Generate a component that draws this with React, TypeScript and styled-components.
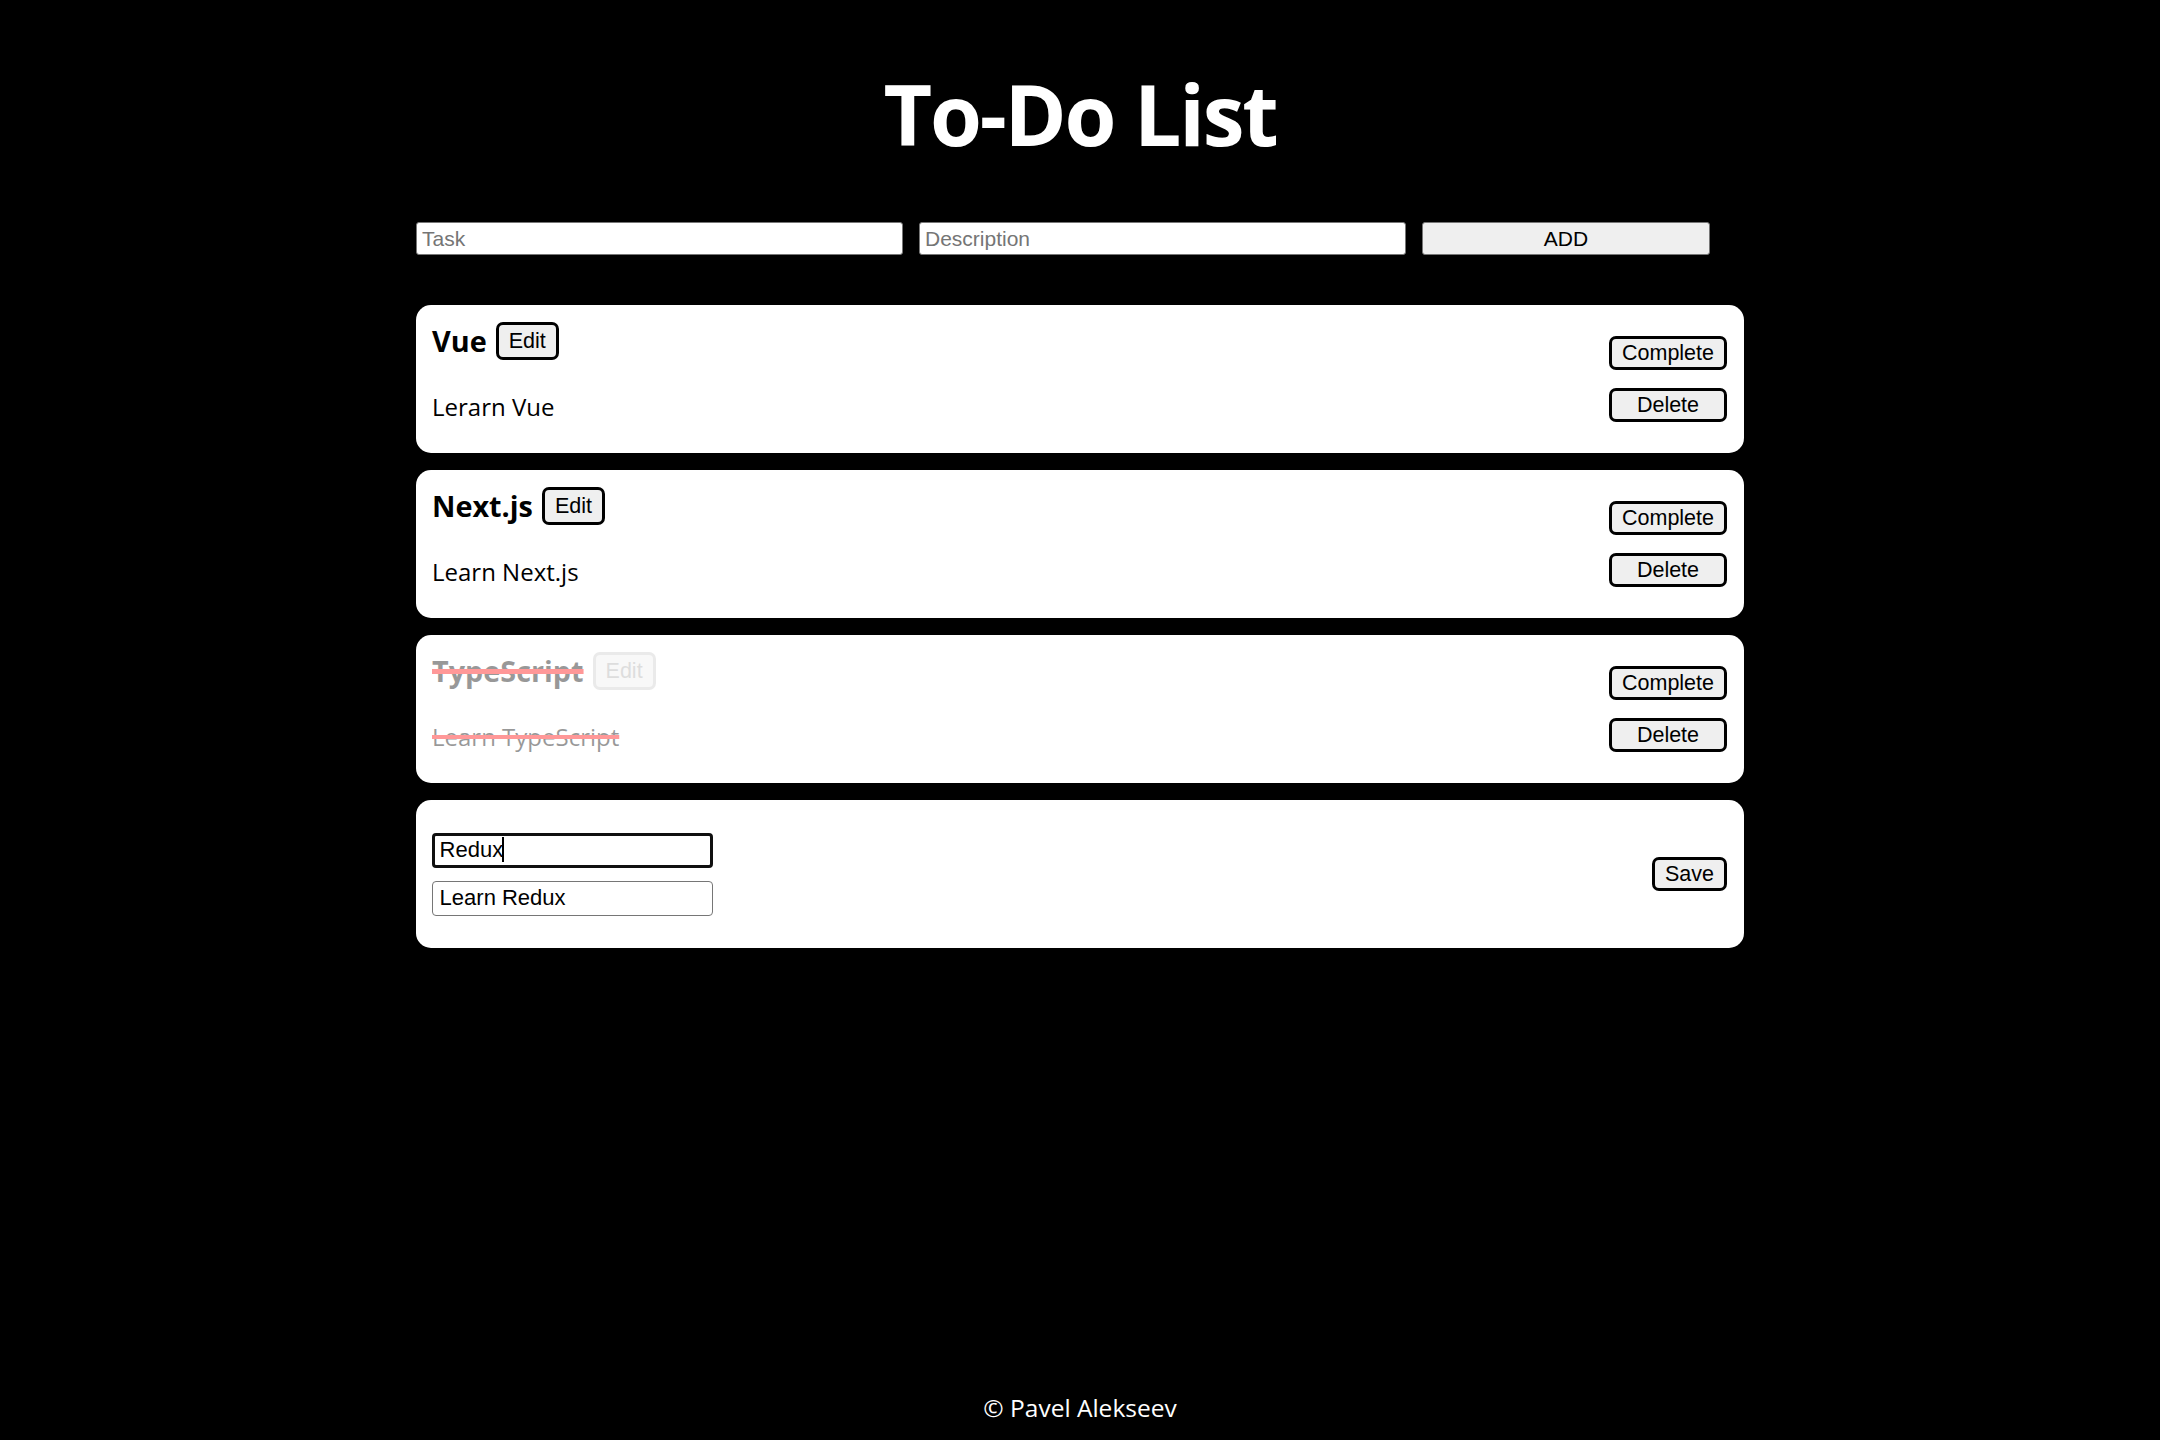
import React, { useEffect, useRef } from 'react';
import styled, { createGlobalStyle } from 'styled-components';

const GlobalStyle = createGlobalStyle`
  html, body {
    margin: 0;
    padding: 0;
    background: #000;
  }
  body {
    font-family: "Open Sans", "Noto Sans", sans-serif;
  }
  * {
    box-sizing: border-box;
  }
`;

const Page = styled.div`
  min-height: 100vh;
  display: flex;
  flex-direction: column;
  align-items: center;
  padding-top: 64px;
`;

const Title = styled.h1`
  margin: 0;
  font-size: 84px;
  font-weight: 700;
  line-height: 100px;
  letter-spacing: -2.2px;
  color: #fff;
  text-align: center;
`;

const Main = styled.main`
  width: 1328px;
  margin-top: 58px;
`;

const AddForm = styled.form`
  display: flex;
  gap: 16px;
  height: 33px;
`;

const FormInput = styled.input`
  width: 487px;
  height: 33px;
  padding: 0 5px;
  border: 1px solid #767676;
  border-radius: 3px;
  background: #fff;
  font-family: "Liberation Sans", Arial, sans-serif;
  font-size: 21px;
  color: #000;
  outline: none;

  &::placeholder {
    color: #757575;
  }
`;

const AddButton = styled.button`
  width: 288px;
  height: 33px;
  border: 1px solid #767676;
  border-radius: 3px;
  background: #efefef;
  font-family: "Liberation Sans", Arial, sans-serif;
  font-size: 21px;
  color: #000;
`;

const TodoList = styled.ul`
  list-style: none;
  margin: 50px 0 0;
  padding: 0;
  display: flex;
  flex-direction: column;
  gap: 17px;
`;

const Card = styled.li`
  height: 148px;
  background: #fff;
  border-radius: 15px;
  display: flex;
  align-items: center;
  justify-content: space-between;
  padding: 0 17px 0 16px;
`;

const Info = styled.div<{ $done: boolean }>`
  align-self: flex-start;
  padding-top: 17px;
  display: flex;
  flex-direction: column;
  opacity: ${({ $done }) => ($done ? 0.4 : 1)};
`;

const HeadRow = styled.div`
  display: flex;
  align-items: stretch;
  gap: 9px;
`;

const TaskTitle = styled.h3<{ $done: boolean }>`
  margin: 0;
  font-size: 28.8px;
  font-weight: 700;
  line-height: 38.4px;
  color: #000;
  text-decoration: ${({ $done }) => ($done ? 'line-through' : 'none')};
  text-decoration-color: #ff0000;
  text-decoration-thickness: 5px;
`;

const TaskDesc = styled.p<{ $done: boolean }>`
  margin: 31px 0 0;
  font-size: 24px;
  line-height: 32px;
  color: #000;
  text-decoration: ${({ $done }) => ($done ? 'line-through' : 'none')};
  text-decoration-color: #ff0000;
  text-decoration-thickness: 4px;
`;

const Actions = styled.div`
  display: flex;
  flex-direction: column;
  gap: 18px;
`;

const ActionButton = styled.button`
  padding: 1.5px 10px;
  border: 3px solid #000;
  border-radius: 7px;
  background: #efefef;
  font-family: "Liberation Sans", Arial, sans-serif;
  font-size: 21.5px;
  color: #000;
  cursor: pointer;

  &:disabled {
    color: #acacac;
    border-color: #cbcbcb;
    cursor: default;
  }
`;

const EditFields = styled.div`
  display: flex;
  flex-direction: column;
  gap: 13px;
  width: 281px;
`;

const FieldWrap = styled.div`
  position: relative;
  display: flex;
`;

const EditInput = styled.input<{ $active?: boolean }>`
  width: 100%;
  height: 35px;
  padding: 0 ${({ $active }) => ($active ? '4.6px' : '6.6px')};
  border: ${({ $active }) => ($active ? '3px solid #101010' : '1px solid #767676')};
  border-radius: 4px;
  background: #fff;
  font-family: "Liberation Sans", Arial, sans-serif;
  font-size: 22px;
  color: #000;
  caret-color: transparent;
  outline: none;
`;

const Caret = styled.span`
  position: absolute;
  left: 70px;
  top: 4px;
  width: 2px;
  height: 25px;
  background: #000;
  pointer-events: none;
`;

const Footer = styled.footer`
  margin-top: auto;
  padding-bottom: 16px;
  font-size: 24.5px;
  line-height: 32px;
  color: #fff;
`;

type Todo = {
  id: number;
  title: string;
  description: string;
  completed: boolean;
  editing: boolean;
};

const todos: Todo[] = [
  { id: 1, title: 'Vue', description: 'Lerarn Vue', completed: false, editing: false },
  { id: 2, title: 'Next.js', description: 'Learn Next.js', completed: false, editing: false },
  { id: 3, title: 'TypeScript', description: 'Learn TypeScript', completed: true, editing: false },
  { id: 4, title: 'Redux', description: 'Learn Redux', completed: false, editing: true },
];

const EditingCard: React.FC<{ todo: Todo }> = ({ todo }) => {
  const titleRef = useRef<HTMLInputElement>(null);

  useEffect(() => {
    const el = titleRef.current;
    if (el) {
      el.focus();
      el.setSelectionRange(el.value.length, el.value.length);
    }
  }, []);

  return (
    <Card>
      <EditFields>
        <FieldWrap>
          <EditInput ref={titleRef} $active defaultValue={todo.title} />
          <Caret />
        </FieldWrap>
        <FieldWrap>
          <EditInput defaultValue={todo.description} />
        </FieldWrap>
      </EditFields>
      <ActionButton>Save</ActionButton>
    </Card>
  );
};

export default function App() {
  return (
    <>
      <GlobalStyle />
      <Page>
        <Title>To-Do List</Title>
        <Main>
          <AddForm onSubmit={(e) => e.preventDefault()}>
            <FormInput placeholder="Task" />
            <FormInput placeholder="Description" />
            <AddButton type="submit">ADD</AddButton>
          </AddForm>

          <TodoList>
            {todos.map((todo) =>
              todo.editing ? (
                <EditingCard key={todo.id} todo={todo} />
              ) : (
                <Card key={todo.id}>
                  <Info $done={todo.completed}>
                    <HeadRow>
                      <TaskTitle $done={todo.completed}>{todo.title}</TaskTitle>
                      <ActionButton disabled={todo.completed}>Edit</ActionButton>
                    </HeadRow>
                    <TaskDesc $done={todo.completed}>{todo.description}</TaskDesc>
                  </Info>
                  <Actions>
                    <ActionButton>Complete</ActionButton>
                    <ActionButton>Delete</ActionButton>
                  </Actions>
                </Card>
              )
            )}
          </TodoList>
        </Main>
        <Footer>© Pavel Alekseev</Footer>
      </Page>
    </>
  );
}
